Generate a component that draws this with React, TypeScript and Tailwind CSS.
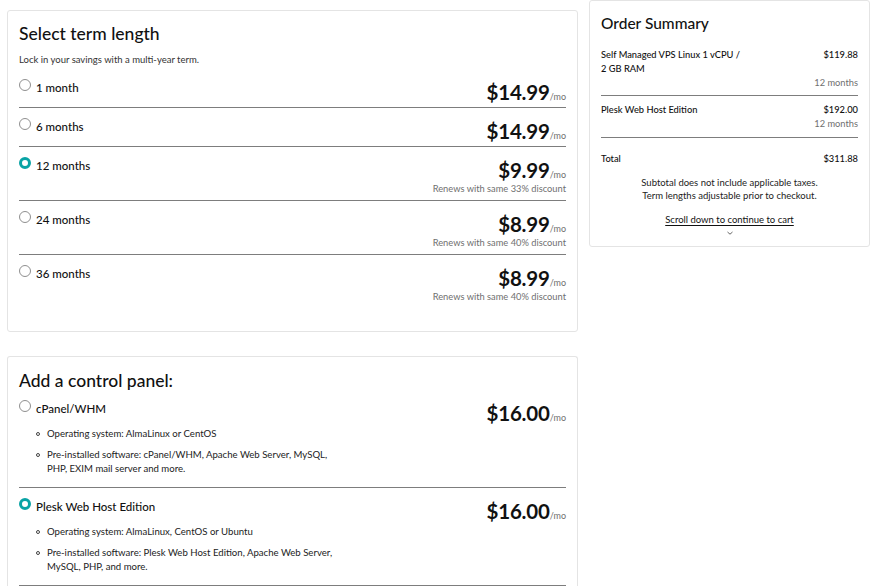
import React from "react";

type Term = {
  label: string;
  price: string;
  renew?: string;
  selected?: boolean;
};

type Panel = {
  label: string;
  price: string;
  bullets: React.ReactNode[];
  selected?: boolean;
};

const TERMS: Term[] = [
  { label: "1 month", price: "$14.99" },
  { label: "6 months", price: "$14.99" },
  {
    label: "12 months",
    price: "$9.99",
    renew: "Renews with same 33% discount",
    selected: true,
  },
  { label: "24 months", price: "$8.99", renew: "Renews with same 40% discount" },
  { label: "36 months", price: "$8.99", renew: "Renews with same 40% discount" },
];

const PANELS: Panel[] = [
  {
    label: "cPanel/WHM",
    price: "$16.00",
    bullets: [
      "Operating system: AlmaLinux or CentOS",
      <>
        Pre-installed software: cPanel/WHM, Apache Web Server, MySQL,
        <br />
        PHP, EXIM mail server and more.
      </>,
    ],
  },
  {
    label: "Plesk Web Host Edition",
    price: "$16.00",
    selected: true,
    bullets: [
      "Operating system: AlmaLinux, CentOS or Ubuntu",
      <>
        Pre-installed software: Plesk Web Host Edition, Apache Web Server,
        <br />
        MySQL, PHP, and more.
      </>,
    ],
  },
];

function Radio({ checked }: { checked?: boolean }) {
  if (checked) {
    return (
      <span className="mt-[1px] box-border block size-[12px] shrink-0 rounded-full border-[3.5px] border-[#09a3a5] bg-white" />
    );
  }
  return (
    <span className="mt-[1px] box-border block size-[12px] shrink-0 rounded-full border border-[#8f8f8f] bg-white" />
  );
}

function Price({ value }: { value: string }) {
  return (
    <div className="h-[28px] text-right leading-[28px] whitespace-nowrap">
      <span className="text-[20.5px] font-bold tracking-[-0.2px] text-[#111]">
        {value}
      </span>
      <span className="text-[9px] leading-none text-[#6f6f6f]">/mo</span>
    </div>
  );
}

function TermRow({ term, last }: { term: Term; last: boolean }) {
  return (
    <div
      className={`flex justify-between pt-[9px] ${
        last ? "" : "border-b border-[#7d7d7d]"
      } ${term.renew ? "pb-[5px]" : "pb-[1px]"}`}
    >
      <label className="flex items-start gap-[5px]">
        <Radio checked={term.selected} />
        <span className="mt-[2px] text-[11.5px] font-medium leading-[16px]">
          {term.label}
        </span>
      </label>
      <div className="text-right">
        <Price value={term.price} />
        {term.renew ? (
          <div className="mt-[-1px] text-[9.3px] leading-[12px] text-[#6f6f6f]">
            {term.renew}
          </div>
        ) : null}
      </div>
    </div>
  );
}

function PanelRow({ panel }: { panel: Panel }) {
  return (
    <div className="flex justify-between border-b border-[#7d7d7d] pt-[9px] pb-[11px]">
      <div>
        <label className="flex h-[28px] items-start gap-[5px]">
          <Radio checked={panel.selected} />
          <span className="mt-[2px] text-[11.5px] font-medium leading-[16px]">
            {panel.label}
          </span>
        </label>
        <ul className="flex flex-col gap-[7px] pl-[17px]">
          {panel.bullets.map((bullet, index) => (
            <li
              key={index}
              className="flex items-start gap-[7px] text-[9.6px] leading-[14px] text-[#222]"
            >
              <span className="mt-[5px] box-border block size-[4px] shrink-0 rounded-full border border-[#444]" />
              <span>{bullet}</span>
            </li>
          ))}
        </ul>
      </div>
      <div>
        <Price value={panel.price} />
      </div>
    </div>
  );
}

function SummaryLine({
  name,
  amount,
  term,
  className = "",
}: {
  name: React.ReactNode;
  amount: string;
  term: string;
  className?: string;
}) {
  return (
    <div
      className={`border-b border-[#7d7d7d] text-[9.3px] font-medium leading-[14px] ${className}`}
    >
      <div className="flex justify-between">
        <span>{name}</span>
        <span>{amount}</span>
      </div>
      <div className="text-right font-normal text-[#6f6f6f]">{term}</div>
    </div>
  );
}

export default function App() {
  return (
    <div className="min-h-[588px] bg-white font-['Lato',sans-serif] text-[#111]">
      <div className="flex items-start gap-[11px] pl-[7px]">
        <div className="flex w-[571px] flex-col gap-[24px] pt-[10px]">
          <section className="rounded-[3px] border border-[#e4e4e4] px-[11px] pt-[11px] pb-[23px]">
            <h2 className="text-[17.5px] font-medium leading-[24px]">
              Select term length
            </h2>
            <p className="mt-[7px] text-[9.5px] leading-[14px] text-[#333]">
              Lock in your savings with a multi-year term.
            </p>
            <div className="mt-[2px]">
              {TERMS.map((term, index) => (
                <TermRow
                  key={term.label}
                  term={term}
                  last={index === TERMS.length - 1}
                />
              ))}
            </div>
          </section>

          <section className="rounded-t-[3px] border border-b-0 border-[#e4e4e4] px-[11px] pt-[13px]">
            <h2 className="text-[17.5px] font-medium leading-[22px]">
              Add a control panel:
            </h2>
            <div className="-mt-[2px]">
              {PANELS.map((panel) => (
                <PanelRow key={panel.label} panel={panel} />
              ))}
            </div>
          </section>
        </div>

        <aside className="w-[281px] rounded-[3px] border border-[#e4e4e4] px-[11px] pt-[11px] pb-[10px]">
          <h2 className="text-[15.5px] font-medium leading-[22px]">
            Order Summary
          </h2>
          <div className="mt-[14px]">
            <SummaryLine
              name={
                <>
                  Self Managed VPS Linux 1 vCPU /
                  <br />2 GB RAM
                </>
              }
              amount="$119.88"
              term="12 months"
              className="pb-[5px]"
            />
            <SummaryLine
              name="Plesk Web Host Edition"
              amount="$192.00"
              term="12 months"
              className="pt-[7px] pb-[6px]"
            />
          </div>
          <div className="mt-[14px] flex justify-between text-[9.3px] font-medium leading-[14px]">
            <span>Total</span>
            <span>$311.88</span>
          </div>
          <div className="mt-[10px] text-center text-[9.5px] leading-[13px] text-[#222]">
            <p>Subtotal does not include applicable taxes.</p>
            <p>Term lengths adjustable prior to checkout.</p>
          </div>
          <div className="mt-[11px] flex flex-col items-center text-[9.5px] leading-[13px]">
            <a href="#" className="underline underline-offset-2">
              Scroll down to continue to cart
            </a>
            <svg
              width="8"
              height="6"
              viewBox="0 0 8 6"
              className="mt-[4px]"
              aria-hidden="true"
            >
              <path d="M1.5 2 L4 4.2 L6.5 2" fill="none" stroke="#555" strokeWidth="0.9" />
            </svg>
          </div>
        </aside>
      </div>
    </div>
  );
}
